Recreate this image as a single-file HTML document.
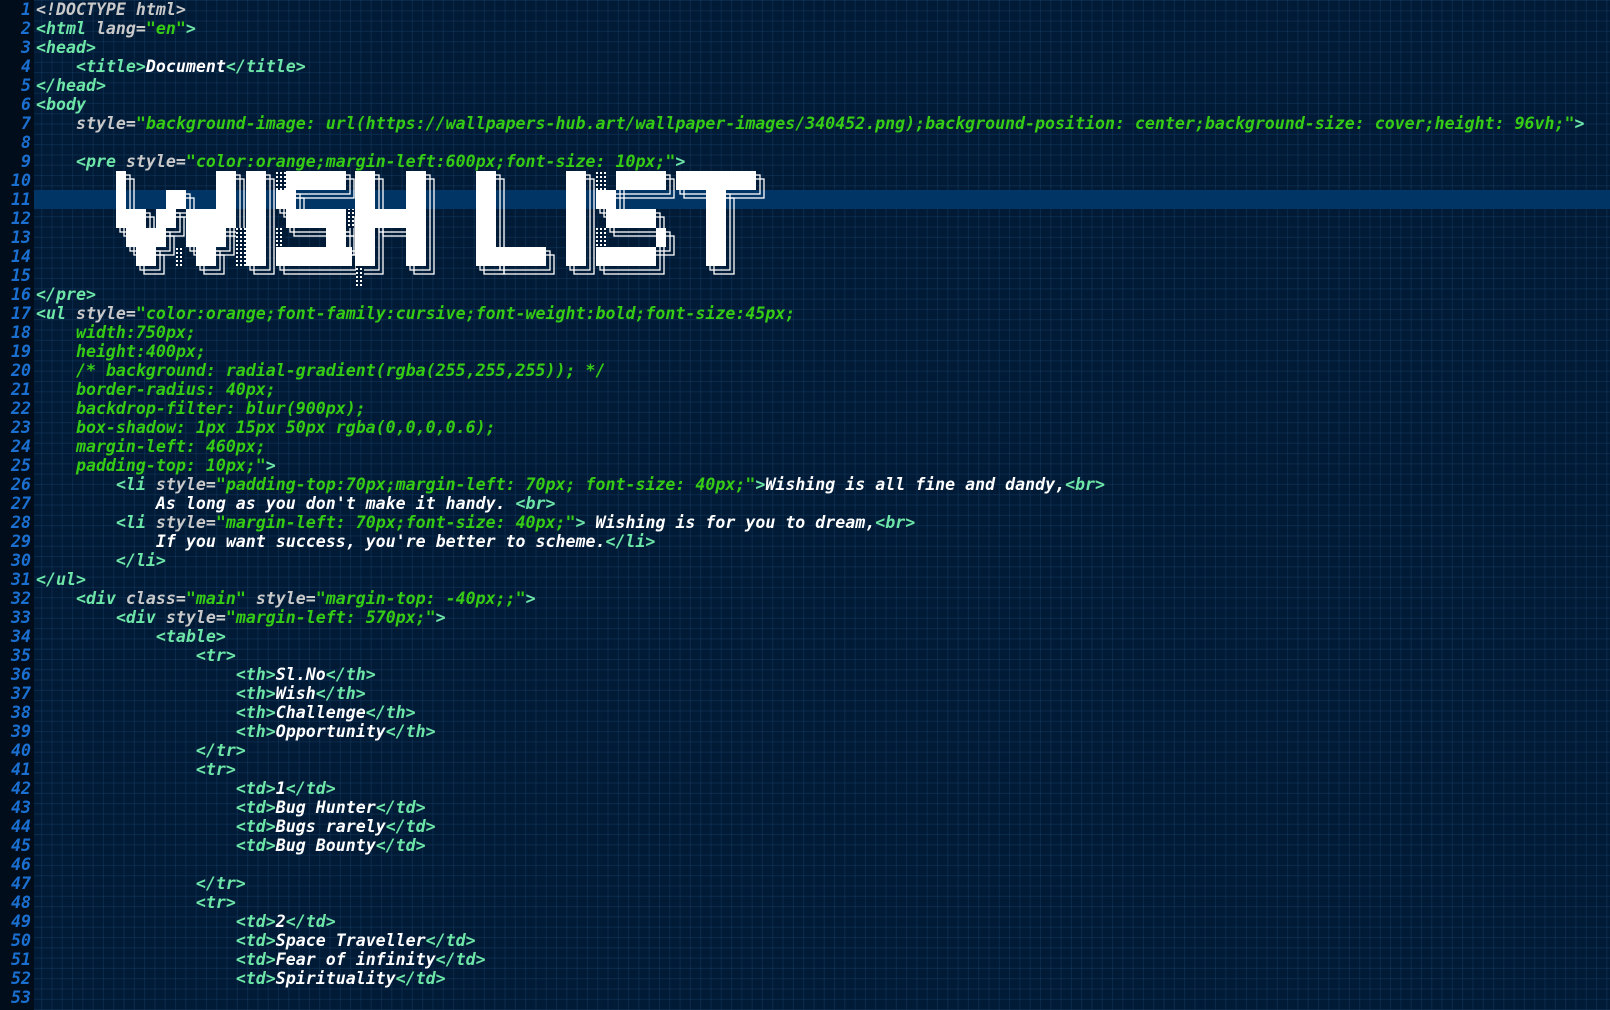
<!DOCTYPE html>
<html><head><meta charset="utf-8"><style>
html,body{margin:0;padding:0;}
body{width:1610px;height:1010px;overflow:hidden;position:relative;
background-color:#011b37;
background-image:linear-gradient(to right, rgba(30,70,110,.35) 1px, transparent 1px),linear-gradient(to bottom, rgba(30,70,110,.35) 1px, transparent 1px);
background-size:10.3px 10.3px;
font-family:"DejaVu Sans Mono","Liberation Mono",monospace;font-weight:bold;font-style:italic;font-size:16.6px;}
#gut{position:absolute;left:0;top:0;width:34px;height:1010px;background:#010d1b;}
#hl{position:absolute;left:34px;top:190px;width:1576px;height:19px;background:#003566;}
.ln{position:absolute;left:0;width:31px;text-align:right;color:#1a6fd0;height:19px;line-height:19px;}
.l{position:absolute;left:36px;height:19px;line-height:19px;white-space:pre;color:#fff;}
.t{color:#6ee6a8}.a{color:#c9c9c9}.s{color:#36cc14}.x{color:#fff}.d{color:#c9c9c9}
svg{position:absolute;left:0;top:0}
</style></head><body>
<div id="gut"></div><div id="hl"></div>
<div class="ln" style="top:0px">1</div><div class="ln" style="top:19px">2</div><div class="ln" style="top:38px">3</div><div class="ln" style="top:57px">4</div><div class="ln" style="top:76px">5</div><div class="ln" style="top:95px">6</div><div class="ln" style="top:114px">7</div><div class="ln" style="top:133px">8</div><div class="ln" style="top:152px">9</div><div class="ln" style="top:171px">10</div><div class="ln" style="top:190px">11</div><div class="ln" style="top:209px">12</div><div class="ln" style="top:228px">13</div><div class="ln" style="top:247px">14</div><div class="ln" style="top:266px">15</div><div class="ln" style="top:285px">16</div><div class="ln" style="top:304px">17</div><div class="ln" style="top:323px">18</div><div class="ln" style="top:342px">19</div><div class="ln" style="top:361px">20</div><div class="ln" style="top:380px">21</div><div class="ln" style="top:399px">22</div><div class="ln" style="top:418px">23</div><div class="ln" style="top:437px">24</div><div class="ln" style="top:456px">25</div><div class="ln" style="top:475px">26</div><div class="ln" style="top:494px">27</div><div class="ln" style="top:513px">28</div><div class="ln" style="top:532px">29</div><div class="ln" style="top:551px">30</div><div class="ln" style="top:570px">31</div><div class="ln" style="top:589px">32</div><div class="ln" style="top:608px">33</div><div class="ln" style="top:627px">34</div><div class="ln" style="top:646px">35</div><div class="ln" style="top:665px">36</div><div class="ln" style="top:684px">37</div><div class="ln" style="top:703px">38</div><div class="ln" style="top:722px">39</div><div class="ln" style="top:741px">40</div><div class="ln" style="top:760px">41</div><div class="ln" style="top:779px">42</div><div class="ln" style="top:798px">43</div><div class="ln" style="top:817px">44</div><div class="ln" style="top:836px">45</div><div class="ln" style="top:855px">46</div><div class="ln" style="top:874px">47</div><div class="ln" style="top:893px">48</div><div class="ln" style="top:912px">49</div><div class="ln" style="top:931px">50</div><div class="ln" style="top:950px">51</div><div class="ln" style="top:969px">52</div><div class="ln" style="top:988px">53</div>

<div class="l d" style="top:0px">&lt;!DOCTYPE html&gt;</div>
<div class="l" style="top:19px"><span class="t">&lt;html</span><span class="a"> lang=</span><span class="s">"en"</span><span class="t">&gt;</span></div>
<div class="l t" style="top:38px">&lt;head&gt;</div>
<div class="l" style="top:57px">    <span class="t">&lt;title&gt;</span>Document<span class="t">&lt;/title&gt;</span></div>
<div class="l t" style="top:76px">&lt;/head&gt;</div>
<div class="l t" style="top:95px">&lt;body</div>
<div class="l" style="top:114px"><span class="a">    style=</span><span class="s">"background-image: url(https://wallpapers-hub.art/wallpaper-images/340452.png);background-position: center;background-size: cover;height: 96vh;"</span><span class="t">&gt;</span></div>
<div class="l" style="top:152px">    <span class="t">&lt;pre</span><span class="a"> style=</span><span class="s">"color:orange;margin-left:600px;font-size: 10px;"</span><span class="t">&gt;</span></div>
<div class="l t" style="top:285px">&lt;/pre&gt;</div>
<div class="l" style="top:304px"><span class="t">&lt;ul</span><span class="a"> style=</span><span class="s">"color:orange;font-family:cursive;font-weight:bold;font-size:45px;</span></div>
<div class="l s" style="top:323px">    width:750px;</div>
<div class="l s" style="top:342px">    height:400px;</div>
<div class="l s" style="top:361px">    /* background: radial-gradient(rgba(255,255,255)); */</div>
<div class="l s" style="top:380px">    border-radius: 40px;</div>
<div class="l s" style="top:399px">    backdrop-filter: blur(900px);</div>
<div class="l s" style="top:418px">    box-shadow: 1px 15px 50px rgba(0,0,0,0.6);</div>
<div class="l s" style="top:437px">    margin-left: 460px;</div>
<div class="l" style="top:456px"><span class="s">    padding-top: 10px;"</span><span class="t">&gt;</span></div>
<div class="l" style="top:475px">        <span class="t">&lt;li</span><span class="a"> style=</span><span class="s">"padding-top:70px;margin-left: 70px; font-size: 40px;"</span><span class="t">&gt;</span>Wishing is all fine and dandy,<span class="t">&lt;br&gt;</span></div>
<div class="l" style="top:494px">            As long as you don't make it handy. <span class="t">&lt;br&gt;</span></div>
<div class="l" style="top:513px">        <span class="t">&lt;li</span><span class="a"> style=</span><span class="s">"margin-left: 70px;font-size: 40px;"</span><span class="t">&gt;</span> Wishing is for you to dream,<span class="t">&lt;br&gt;</span></div>
<div class="l" style="top:532px">            If you want success, you're better to scheme.<span class="t">&lt;/li&gt;</span></div>
<div class="l t" style="top:551px">        &lt;/li&gt;</div>
<div class="l t" style="top:570px">&lt;/ul&gt;</div>
<div class="l" style="top:589px">    <span class="t">&lt;div</span><span class="a"> class=</span><span class="s">"main"</span><span class="a"> style=</span><span class="s">"margin-top: -40px;;"</span><span class="t">&gt;</span></div>
<div class="l" style="top:608px">        <span class="t">&lt;div</span><span class="a"> style=</span><span class="s">"margin-left: 570px;"</span><span class="t">&gt;</span></div>
<div class="l t" style="top:627px">            &lt;table&gt;</div>
<div class="l t" style="top:646px">                &lt;tr&gt;</div>
<div class="l" style="top:665px">                    <span class="t">&lt;th&gt;</span>Sl.No<span class="t">&lt;/th&gt;</span></div>
<div class="l" style="top:684px">                    <span class="t">&lt;th&gt;</span>Wish<span class="t">&lt;/th&gt;</span></div>
<div class="l" style="top:703px">                    <span class="t">&lt;th&gt;</span>Challenge<span class="t">&lt;/th&gt;</span></div>
<div class="l" style="top:722px">                    <span class="t">&lt;th&gt;</span>Opportunity<span class="t">&lt;/th&gt;</span></div>
<div class="l t" style="top:741px">                &lt;/tr&gt;</div>
<div class="l t" style="top:760px">                &lt;tr&gt;</div>
<div class="l" style="top:779px">                    <span class="t">&lt;td&gt;</span>1<span class="t">&lt;/td&gt;</span></div>
<div class="l" style="top:798px">                    <span class="t">&lt;td&gt;</span>Bug Hunter<span class="t">&lt;/td&gt;</span></div>
<div class="l" style="top:817px">                    <span class="t">&lt;td&gt;</span>Bugs rarely<span class="t">&lt;/td&gt;</span></div>
<div class="l" style="top:836px">                    <span class="t">&lt;td&gt;</span>Bug Bounty<span class="t">&lt;/td&gt;</span></div>
<div class="l t" style="top:874px">                &lt;/tr&gt;</div>
<div class="l t" style="top:893px">                &lt;tr&gt;</div>
<div class="l" style="top:912px">                    <span class="t">&lt;td&gt;</span>2<span class="t">&lt;/td&gt;</span></div>
<div class="l" style="top:931px">                    <span class="t">&lt;td&gt;</span>Space Traveller<span class="t">&lt;/td&gt;</span></div>
<div class="l" style="top:950px">                    <span class="t">&lt;td&gt;</span>Fear of infinity<span class="t">&lt;/td&gt;</span></div>
<div class="l" style="top:969px">                    <span class="t">&lt;td&gt;</span>Spirituality<span class="t">&lt;/td&gt;</span></div>

<svg width="1610" height="1010" viewBox="0 0 1610 1010">
<defs>
<pattern id="dots" width="4" height="4" patternUnits="userSpaceOnUse"><rect width="4" height="4" fill="#011b37"/><rect x="0" y="0" width="2" height="2" fill="#fff"/></pattern>
<g id="art">
<rect x="116" y="171" width="10" height="57"/>
<rect x="216" y="171" width="20" height="57"/>
<rect x="166" y="190" width="20" height="19"/>
<rect x="126" y="209" width="20" height="38"/>
<rect x="156" y="209" width="20" height="19"/>
<rect x="146" y="228" width="20" height="19"/>
<rect x="186" y="209" width="40" height="38"/>
<rect x="136" y="247" width="20" height="19"/>
<rect x="196" y="247" width="20" height="19"/>
<rect x="246" y="171" width="20" height="95"/>
<rect x="286" y="171" width="60" height="19"/>
<rect x="276" y="190" width="20" height="19"/>
<rect x="286" y="209" width="60" height="19"/>
<rect x="326" y="228" width="20" height="19"/>
<rect x="276" y="247" width="76" height="19"/>
<rect x="355" y="171" width="20" height="95"/>
<rect x="406" y="171" width="20" height="95"/>
<rect x="375" y="209" width="31" height="19"/>
<rect x="476" y="171" width="20" height="95"/>
<rect x="496" y="247" width="50" height="19"/>
<rect x="566" y="171" width="20" height="95"/>
<rect x="616" y="171" width="50" height="19"/>
<rect x="596" y="190" width="20" height="19"/>
<rect x="606" y="209" width="50" height="19"/>
<rect x="656" y="228" width="10" height="19"/>
<rect x="596" y="247" width="60" height="19"/>
<rect x="676" y="171" width="80" height="19"/>
<rect x="706" y="190" width="20" height="76"/>
</g>
</defs>
<use href="#art" transform="translate(8,8)" fill="none" stroke="#fff" stroke-width="1.3"/>
<use href="#art" transform="translate(4,4)" fill="none" stroke="#fff" stroke-width="1.3"/>
<use href="#art" fill="#fff"/>
<rect x="276" y="171" width="10" height="19" fill="url(#dots)"/>
<rect x="236" y="228" width="10" height="38" fill="url(#dots)"/>
<rect x="176" y="247" width="8" height="19" fill="url(#dots)"/>
<rect x="346" y="209" width="8" height="19" fill="url(#dots)"/>
<rect x="276" y="228" width="8" height="19" fill="url(#dots)"/>
<rect x="356" y="266" width="8" height="20" fill="url(#dots)"/>
<rect x="596" y="171" width="10" height="19" fill="url(#dots)"/>
<rect x="596" y="228" width="10" height="19" fill="url(#dots)"/>
</svg>
</body></html>
